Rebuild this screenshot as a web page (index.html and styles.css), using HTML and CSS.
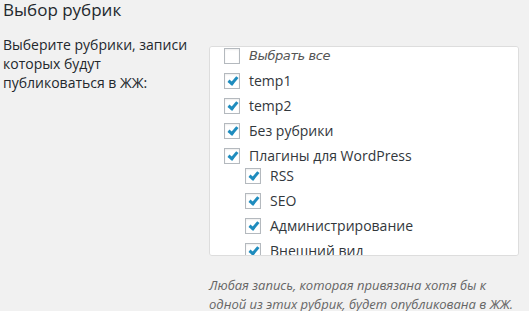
FILE: index.html
```html
<!DOCTYPE html>
<html lang="ru">
	<head>
		<meta charset="utf-8" />
		<title>Выбор рубрик</title>
		<link rel="stylesheet" href="styles.css">
	</head>

	<body>
		<h2 class="title">Выбор рубрик</h2>

		<div class="row">
			<div class="label">Выберите рубрики, записи которых будут публиковаться в ЖЖ:</div>

			<div class="field">
				<div class="box">
					<ul class="cats">
						<li><span class="cb"></span><em>Выбрать все</em></li>
						<li><span class="cb on"></span>temp1</li>
						<li><span class="cb on"></span>temp2</li>
						<li><span class="cb on"></span>Без рубрики</li>
						<li><span class="cb on"></span>Плагины для WordPress</li>
						<li class="child first"><span class="cb on"></span>RSS</li>
						<li class="child"><span class="cb on"></span>SEO</li>
						<li class="child"><span class="cb on"></span>Администрирование</li>
						<li class="child"><span class="cb on"></span>Внешний вид</li>
						<li class="child"><span class="cb on"></span>Безопасность</li>
						<li class="child"><span class="cb on"></span>Виджеты</li>
						<li class="child"><span class="cb on"></span>Кеширование</li>
						<li class="child"><span class="cb on"></span>Комментарии</li>
						<li class="child"><span class="cb on"></span>Локализация</li>
						<li class="child"><span class="cb on"></span>Медиафайлы</li>
						<li class="child"><span class="cb on"></span>Оптимизация</li>
						<li class="child"><span class="cb on"></span>Поиск</li>
						<li class="child"><span class="cb on"></span>Социальные сети</li>
						<li class="child"><span class="cb on"></span>Статистика</li>
						<li class="child"><span class="cb on"></span>Редактор</li>
						<li><span class="cb on"></span>Темы</li>
						<li><span class="cb on"></span>Новости</li>
					</ul>
				</div>
				<p class="description">Любая запись, которая привязана хотя бы к одной из этих рубрик, будет опубликована в ЖЖ.</p>
			</div>
		</div>
	</body>
</html>
```

FILE: styles.css
```css
body{
	margin: 0;
	background-color: #f1f1f1;
	font-family: "Open Sans", "Liberation Sans", sans-serif;
	color: #23282d;
}

.title{
	font-size: 17px;
	font-weight: 400;
	line-height: 20px;
	margin: 0;
	padding: 0 3px;
}

.row{
	display: flex;
	margin-top: 15px;
}

.label{
	width: 196px;
	padding: 0 10px 0 3px;
	font-size: 14px;
	line-height: 19px;
}

.field{
	width: 310px;
	padding-top: 11px;
}

.box{
	height: 208px;
	background-color: #fff;
	border: 1px solid #dddddd;
	border-radius: 3px;
	overflow-y: scroll;
}

.box::-webkit-scrollbar{
	width: 15px;
}
.box::-webkit-scrollbar-track{
	background-color: #f1f1f1;
	border-left: 1px solid #dcdcdc;
}
.box::-webkit-scrollbar-thumb{
	background-color: #d2d2d2;
	border: 2px solid #f1f1f1;
	border-left-width: 3px;
	box-shadow: inset 0 0 0 1px #b8b8b8;
	border-radius: 3px;
}

.cats{
	list-style: none;
	margin: -4px 0 0;
	padding: 0 0 0 14px;
}

.cats li{
	display: flex;
	align-items: center;
	height: 25px;
	font-size: 14px;
	color: #32373c;
}

.cats li.child{
	padding-left: 21px;
}

.cats li.first{
	margin-top: -5px;
}

.cats em{
	font-family: "DejaVu Sans", sans-serif;
	font-size: 13px;
	letter-spacing: -0.4px;
	color: #555;
}

.cb{
	width: 14px;
	height: 14px;
	margin-right: 9px;
	border: 1px solid #b4b9be;
	background-color: #fff;
	box-shadow: inset 0 1px 2px rgba(0, 0, 0, 0.07);
	position: relative;
	flex-shrink: 0;
}

.cb.on::after{
	content: "";
	position: absolute;
	left: 5px;
	top: 1px;
	width: 3px;
	height: 7px;
	border: solid #1e8cbe;
	border-width: 0 3px 3px 0;
	transform: rotate(40deg);
}

.description{
	margin: 20px 0 0;
	font-size: 13px;
	line-height: 19px;
	font-style: italic;
	color: #666;
}
```
